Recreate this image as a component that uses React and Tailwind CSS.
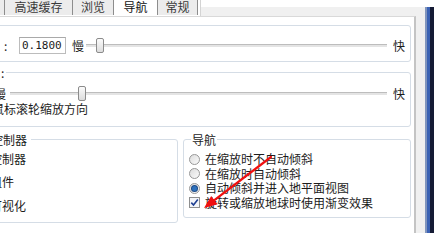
import React from "react";

function Strip({ top }) {
  return (
    <div className={top ? "flex w-[9px] border-t-[7px] border-white" : "flex w-[9px]"}>
      <div className="w-[2px] bg-[#8195bd]" />
      <div className="w-[3px] bg-[#3b62b4]" />
      <div className="flex-1 bg-[#151b35]" />
    </div>
  );
}

function Tab({ className, label, selected }) {
  return (
    <div
      className={
        (selected
          ? "bg-white text-[#111] "
          : "bg-[#ececec] text-[#3a3a3a] ") +
        "h-[15px] border-l border-[#8d8d8d] flex justify-center items-start pt-[1px] leading-[12px] " +
        className
      }
    >
      {label}
    </div>
  );
}

function Thumb() {
  return (
    <div className="w-[8px] h-[15px] shrink-0 rounded-[2px] border border-[#8b8b8b] bg-linear-to-b from-[#fbfbfb] to-[#dcdcdc]" />
  );
}

function Track({ className }) {
  return <div className={"h-[3px] border-t border-[#bdbdbd] bg-[#e4e4e4] " + className} />;
}

function Radio({ checked }) {
  return (
    <div className="w-[11px] h-[11px] shrink-0 rounded-full border border-[#979797] bg-linear-to-br from-[#dcdcdc] to-[#fbfbfb] flex items-center justify-center">
      {checked && <div className="w-[5px] h-[5px] rounded-full bg-[#2f72bd] ring-1 ring-[#1d4a86]" />}
    </div>
  );
}

function Checkbox() {
  return (
    <div className="w-[11px] h-[11px] shrink-0 border border-[#8e8f8f] bg-[#f3f5f9] flex items-center justify-center">
      <svg width="9" height="9" viewBox="0 0 9 9">
        <path d="M1.3 4.6 L3.5 7 L7.8 1.6" fill="none" stroke="#1f3f92" strokeWidth="1.6" />
      </svg>
    </div>
  );
}

export default function App() {
  return (
    <div className="relative w-[434px] h-[242px] bg-white overflow-hidden flex flex-col text-[12px] text-[#1c1c1c] font-['Noto_Sans_CJK_SC',sans-serif]">
      {/* tab strip */}
      <div className="flex h-[16px]">
        <div className="w-[4px] h-[15px] bg-[#ececec]" />
        <Tab className="w-[68px]" label="高速缓存" />
        <Tab className="w-[41px]" label="浏览" />
        <Tab className="w-[44px]" label="导航" selected />
        <Tab className="w-[41px] border-r" label="常规" />
        <div className="w-[3px] h-[16px] bg-white border-r border-[#d4d4d4]" />
        <div className="flex-1 h-[16px] border-t-[7px] border-white bg-[#f0f0f0]" />
        <Strip top />
      </div>

      {/* main row */}
      <div className="flex h-[217px]">
        <div className="w-[416px] h-full border-t border-r-2 border-t-[#d9d9d9] border-r-[#c4c4c4] bg-white overflow-hidden flex flex-col pr-[3px]">
          {/* group 1 */}
          <div className="-ml-[6px] mt-[8px] h-[37px] shrink-0 border border-[#d5dde6] rounded-[3px] flex items-center pt-[4px] pl-[8px] pr-[5px]">
            <span className="w-[16px] pl-[1px]">:</span>
            <div className="w-[47px] h-[17px] shrink-0 border border-[#bcbcbc] border-t-[#a9a9a9] pl-[2px] leading-[15px] text-[11px] font-['DejaVu_Sans_Mono',monospace]">
              0.1800
            </div>
            <span className="ml-[6px] w-[12px] shrink-0">慢</span>
            <div className="ml-[2px] flex-1 flex items-center h-[15px]">
              <Track className="w-[10px]" />
              <Thumb />
              <Track className="flex-1" />
            </div>
            <span className="ml-[6px] w-[12px] shrink-0">快</span>
          </div>

          {/* group 2 */}
          <div className="-ml-[6px] mt-[10px] h-[55px] shrink-0 border border-[#d5dde6] rounded-[3px] flex flex-col pr-[5px]">
            <div className="-mt-[7px] h-[14px] leading-[14px] self-start bg-white pl-[6px] pr-[2px]">:</div>
            <div className="mt-[6px] flex items-center h-[15px]">
              <span className="-ml-[1px] w-[12px] shrink-0">慢</span>
              <Track className="ml-[4px] w-[68px]" />
              <Thumb />
              <Track className="flex-1" />
              <span className="ml-[6px] w-[12px] shrink-0">快</span>
            </div>
            <div className="mt-[1px] leading-[14px] -ml-[27px] whitespace-nowrap">反转鼠标滚轮缩放方向</div>
          </div>

          {/* bottom groups */}
          <div className="mt-[12px] flex items-start">
            <div className="-ml-[6px] w-[184px] h-[84px] shrink-0 border border-[#d5dde6] rounded-[3px] flex flex-col">
              <div className="-mt-[7px] h-[14px] leading-[14px] self-start bg-white -ml-[40px] pr-[4px] whitespace-nowrap">非鼠标控制器</div>
              <div className="mt-[5px] leading-[14px] -ml-[29px] whitespace-nowrap">启用控制器</div>
              <div className="mt-[9px] leading-[14px] -ml-[29px] whitespace-nowrap">启用组件</div>
              <div className="mt-[10px] leading-[14px] -ml-[29px] whitespace-nowrap">启用可视化</div>
            </div>
            <div className="ml-[5px] w-[228px] h-[79px] shrink-0 border border-[#d5dde6] rounded-[3px] flex flex-col">
              <div className="-mt-[7px] h-[14px] leading-[14px] self-start bg-white ml-[7px] px-[1px]">导航</div>
              <div className="mt-[5px] h-[14.5px] flex items-center pl-[5px] gap-[5px] whitespace-nowrap">
                <Radio />
                <span className="leading-[14px]">在缩放时不自动倾斜</span>
              </div>
              <div className="h-[14.5px] flex items-center pl-[5px] gap-[5px] whitespace-nowrap">
                <Radio />
                <span className="leading-[14px]">在缩放时自动倾斜</span>
              </div>
              <div className="h-[14.5px] flex items-center pl-[5px] gap-[5px] whitespace-nowrap">
                <Radio checked />
                <span className="leading-[14px]">自动倾斜并进入地平面视图</span>
              </div>
              <div className="h-[14.5px] flex items-center pl-[5px] gap-[5px] whitespace-nowrap">
                <Checkbox />
                <span className="leading-[14px]">旋转或缩放地球时使用渐变效果</span>
              </div>
            </div>
          </div>
        </div>
        <div className="w-[9px] h-full bg-[#f0f0f0]" />
        <Strip />
      </div>

      {/* red annotation arrow */}
      <svg className="absolute left-0 top-0 pointer-events-none" width="434" height="242" viewBox="0 0 434 242">
        <line x1="271" y1="157" x2="214.4" y2="200.1" stroke="#f01010" strokeWidth="2.2" strokeLinecap="round" />
        <polygon points="204,208 217.6,204.3 211.2,196" fill="#f01010" />
      </svg>
    </div>
  );
}
